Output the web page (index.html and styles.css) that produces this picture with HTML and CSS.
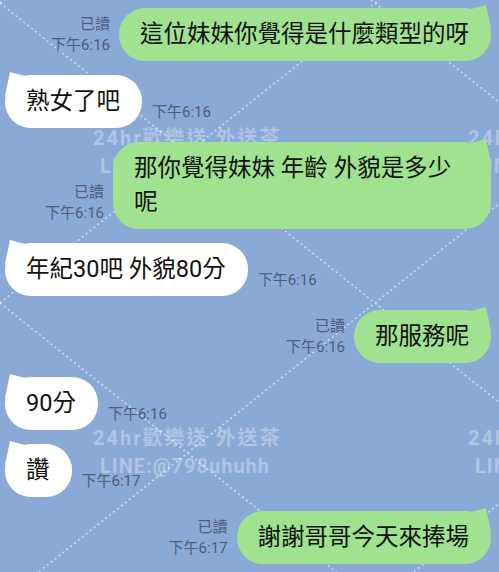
FILE: index.html
```html
<!DOCTYPE html>
<html lang="zh-TW">
<head>
    <meta charset="UTF-8">
    <meta name="viewport" content="width=device-width, initial-scale=1.0">
    <title>LINE 聊天</title>
    <link rel="stylesheet" href="styles.css">
</head>
<body>
    <div class="chat">
        <div class="backdrop">
            <svg class="lines" width="499" height="572">
                <defs>
                    <pattern id="diamond" width="375" height="300" y="3" patternUnits="userSpaceOnUse">
                        <path d="M0 0L375 300M0 300L375 0" stroke="#fff" stroke-width="1.5" stroke-dasharray="2 3" fill="none"/>
                    </pattern>
                </defs>
                <rect width="100%" height="100%" fill="url(#diamond)"/>
            </svg>
            <div class="marks">
                <div class="mark"><span>24hr歡樂送 外送茶</span><span class="id">LINE:@798uhuhh</span></div>
                <div class="mark"><span>24hr歡樂送 外送茶</span><span class="id">LINE:@798uhuhh</span></div>
                <div class="mark"><span>24hr歡樂送 外送茶</span><span class="id">LINE:@798uhuhh</span></div>
                <div class="mark"><span>24hr歡樂送 外送茶</span><span class="id">LINE:@798uhuhh</span></div>
            </div>
        </div>

        <div class="messages">
            <div class="msg out">
                <div class="meta"><span>已讀</span><span>下午6:16</span></div>
                <div class="bubble">這位妹妹你覺得是什麼類型的呀</div>
            </div>
            <div class="msg in">
                <div class="bubble">熟女了吧</div>
                <div class="meta"><span>下午6:16</span></div>
            </div>
            <div class="msg out">
                <div class="meta"><span>已讀</span><span>下午6:16</span></div>
                <div class="bubble">那你覺得妹妹 年齡 外貌是多少呢</div>
            </div>
            <div class="msg in">
                <div class="bubble">年紀30吧 外貌80分</div>
                <div class="meta"><span>下午6:16</span></div>
            </div>
            <div class="msg out">
                <div class="meta"><span>已讀</span><span>下午6:16</span></div>
                <div class="bubble">那服務呢</div>
            </div>
            <div class="msg in">
                <div class="bubble">90分</div>
                <div class="meta"><span>下午6:16</span></div>
            </div>
            <div class="msg in">
                <div class="bubble">讚</div>
                <div class="meta"><span>下午6:17</span></div>
            </div>
            <div class="msg out">
                <div class="meta"><span>已讀</span><span>下午6:17</span></div>
                <div class="bubble">謝謝哥哥今天來捧場</div>
            </div>
        </div>
    </div>
</body>
</html>
```

FILE: styles.css
```css
:root {
    --chat-bg: #8ba9d6;
    --out-color: #a0e290;
    --in-color: #ffffff;
    --meta-color: #4f5d7a;
}

* {
    margin: 0;
    padding: 0;
    box-sizing: border-box;
}

body {
    font-family: Roboto, "Noto Sans CJK TC", sans-serif;
    background-color: var(--chat-bg);
    overflow: hidden;
}

.chat {
    position: relative;
    height: 572px;
    overflow: hidden;
    background-color: var(--chat-bg);
}

.backdrop {
    position: absolute;
    inset: 0;
}

.lines {
    position: absolute;
    top: 0;
    left: 0;
    opacity: 0.6;
}

.marks {
    position: absolute;
    inset: 0;
    display: grid;
    grid-template-columns: repeat(2, 375px);
    grid-auto-rows: 300px;
    padding: 124px 0 0 93px;
}

.mark {
    display: flex;
    flex-direction: column;
    font-size: 20px;
    line-height: 28px;
    font-weight: bold;
    letter-spacing: 2px;
    white-space: nowrap;
    color: rgba(255, 255, 255, 0.33);
}

.mark .id {
    padding-left: 7px;
    letter-spacing: 1px;
}

.messages {
    position: relative;
    display: flex;
    flex-direction: column;
    gap: 14px;
    padding: 8px 8px 0 5px;
}

.msg {
    display: flex;
    align-items: flex-end;
    gap: 9px;
}

.msg.out {
    justify-content: flex-end;
}

.msg.in {
    gap: 10px;
}

.meta {
    display: flex;
    flex-direction: column;
    align-items: flex-end;
    padding-bottom: 5px;
    font-size: 15px;
    line-height: 21px;
    color: var(--meta-color);
    white-space: nowrap;
}

.msg.in .meta {
    align-items: flex-start;
}

.bubble {
    position: relative;
    max-width: 378px;
    padding: 9px 22px 10px 21px;
    border-radius: 26px;
    font-size: 23.5px;
    line-height: 34px;
    color: #111;
}

.msg.out .bubble {
    background-color: var(--out-color);
}

.msg.in .bubble {
    background-color: var(--in-color);
}

.bubble::after {
    content: '';
    position: absolute;
    top: -3px;
    width: 20px;
    height: 24px;
    background-color: inherit;
}

.msg.out .bubble::after {
    right: 0;
    clip-path: polygon(0 4px, 15px 0, 20px 24px, 0 24px);
}

.msg.in .bubble::after {
    left: 0;
    clip-path: polygon(100% 4px, 5px 0, 0 24px, 100% 24px);
}
```
